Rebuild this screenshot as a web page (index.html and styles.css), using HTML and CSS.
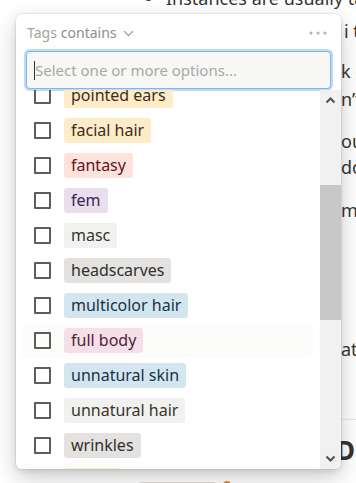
FILE: index.html
```html
<!DOCTYPE html>
<html lang="en">
<head>
  <meta charset="UTF-8">
  <meta name="viewport" content="width=device-width, initial-scale=1.0">
  <title>Tags filter</title>
  <link rel="stylesheet" href="styles.css">
</head>
<body>
  <!-- Page behind the filter menu -->
  <div class="page">
    <ul class="bullets">
      <li>Instances are usually tagged</li>
    </ul>
    <div class="frag frag-1">i t</div>
    <div class="frag frag-2">k c</div>
    <div class="frag frag-3">n’t</div>
    <div class="frag frag-4">ou</div>
    <div class="frag frag-5">do</div>
    <div class="frag frag-6">my</div>
    <div class="frag frag-7">ata</div>
    <hr class="divider">
    <h2 class="frag heading">Da</h2>
    <div class="bottom-bits">
      <span class="pill"></span>
      <span class="dot"></span>
    </div>
  </div>

  <!-- Filter menu -->
  <div class="popup">
    <div class="popup-head">
      <span class="prop">Tags</span>
      <span class="op">contains</span>
      <svg class="chev" width="11" height="7" viewBox="0 0 11 7"><polyline points="1,1 5.5,5.5 10,1" fill="none" stroke="#a5a4a0" stroke-width="1.3"/></svg>
      <svg class="more" width="18" height="4" viewBox="0 0 18 4"><circle cx="2" cy="2" r="1.6" fill="#b4b3af"/><circle cx="9" cy="2" r="1.6" fill="#b4b3af"/><circle cx="16" cy="2" r="1.6" fill="#b4b3af"/></svg>
    </div>

    <div class="search">
      <div class="input"><span class="caret"></span><span class="placeholder">Select one or more options...</span></div>
    </div>

    <div class="list-wrap">
      <div class="list">
        <div class="rows">
          <div class="row"><span class="box"></span><span class="tag yellow">pointed ears</span></div>
          <div class="row"><span class="box"></span><span class="tag yellow">facial hair</span></div>
          <div class="row"><span class="box"></span><span class="tag red">fantasy</span></div>
          <div class="row"><span class="box"></span><span class="tag purple">fem</span></div>
          <div class="row"><span class="box"></span><span class="tag default">masc</span></div>
          <div class="row"><span class="box"></span><span class="tag gray">headscarves</span></div>
          <div class="row"><span class="box"></span><span class="tag blue">multicolor hair</span></div>
          <div class="row hover"><span class="box"></span><span class="tag pink">full body</span></div>
          <div class="row"><span class="box"></span><span class="tag blue">unnatural skin</span></div>
          <div class="row"><span class="box"></span><span class="tag default">unnatural hair</span></div>
          <div class="row"><span class="box"></span><span class="tag gray">wrinkles</span></div>
          <div class="row hover"><span class="box"></span><span class="tag yellow">horns</span></div>
        </div>
      </div>
      <div class="scrollbar">
        <svg class="arrow" width="21" height="20" viewBox="0 0 21 20"><polyline points="6.5,12.5 10.5,8.5 14.5,12.5" fill="none" stroke="#505050" stroke-width="2"/></svg>
        <div class="track">
          <div class="thumb"></div>
        </div>
        <svg class="arrow" width="21" height="20" viewBox="0 0 21 20"><polyline points="6.5,7.5 10.5,11.5 14.5,7.5" fill="none" stroke="#505050" stroke-width="2"/></svg>
      </div>
    </div>
  </div>
</body>
</html>
```

FILE: styles.css
```css
body {
  margin: 0;
  font-family: "Noto Sans", "Open Sans", sans-serif;
  color: #37352f;
  background: #fff;
  overflow: hidden;
  height: 483px;
}

/* Background page */
.page {
  margin-top: -14px;
  font-size: 18px;
  line-height: 24px;
}
.bullets {
  margin: 0;
  padding-left: 166px;
  white-space: nowrap;
}
.bullets li::marker { font-size: 20px; }
.frag {
  padding-left: 341px;
  white-space: nowrap;
  height: 24px;
}
.frag-1 { margin-top: 9px; padding-left: 344px; }
.frag-2 { margin-top: 16px; }
.frag-3 { margin-top: 4px; }
.frag-4 { margin-top: 18px; }
.frag-5 { margin-top: 2px; }
.frag-6 { margin-top: 19px; }
.frag-7 { margin-top: 115px; }
.divider {
  margin: 58px 0 0 341px;
  border: none;
  border-top: 1px solid #e9e9e7;
}
.heading {
  margin: 14px 0 0 0;
  padding-left: 336px;
  font-size: 26px;
  font-weight: 700;
  line-height: 32px;
  height: 32px;
}
.bottom-bits {
  display: flex;
  align-items: flex-start;
  gap: 4px;
  margin-top: 16px;
  padding-left: 135px;
}
.pill {
  width: 82px;
  height: 20px;
  border: 1px solid #dcdbd8;
  border-radius: 6px;
}
.dot {
  width: 8px;
  height: 8px;
  border-radius: 50%;
  background: #d9823b;
  margin-top: -1px;
}

/* Filter menu */
.popup {
  position: absolute;
  left: 16px;
  top: 14px;
  width: 325px;
  height: 455px;
  background: #fff;
  border-radius: 6px;
  overflow: hidden;
  display: flex;
  flex-direction: column;
  box-shadow: rgba(15, 15, 15, 0.05) 0 0 0 1px, rgba(15, 15, 15, 0.1) 0 3px 6px, rgba(15, 15, 15, 0.2) 0 9px 24px;
}
.popup-head {
  height: 37px;
  display: flex;
  align-items: center;
  padding: 0 14px 0 11px;
  font-size: 14px;
  flex-shrink: 0;
}
.prop { color: #a3a29e; }
.op { color: #8f8e8a; margin-left: 4px; }
.chev { margin-left: 6px; margin-top: 1px; }
.more { margin-left: auto; }

.search {
  padding: 0 10px;
  flex-shrink: 0;
}
.input {
  height: 38px;
  display: flex;
  align-items: center;
  padding-left: 8px;
  background: #f7f7f5;
  border-radius: 4px;
  box-shadow: inset 0 0 0 1px rgba(35, 131, 226, 0.55), 0 0 0 2px rgba(35, 131, 226, 0.3);
  font-size: 15px;
}
.caret {
  width: 1px;
  height: 19px;
  background: #37352f;
}
.placeholder { color: #a9a8a4; }

.list-wrap {
  flex: 1;
  display: flex;
  margin-top: 1px;
  min-height: 0;
}
.list {
  flex: 1;
  overflow: hidden;
}
.rows { margin-top: -12px; }
.row {
  height: 35px;
  display: flex;
  align-items: center;
  gap: 13px;
  padding-left: 18px;
}
.row.hover {
  background: #fcfcfb;
  margin: 0 7px 0 6px;
  padding-left: 12px;
  border-radius: 4px;
}
.box {
  width: 17px;
  height: 17px;
  box-sizing: border-box;
  border: 2px solid #5d5d5b;
  border-radius: 1px;
  flex-shrink: 0;
}
.tag {
  height: 25px;
  line-height: 25px;
  padding: 0 7px;
  border-radius: 3px;
  font-size: 16px;
  white-space: nowrap;
}
.tag.yellow { background: #fdecc8; color: #402c1b; }
.tag.red { background: #ffe2dd; color: #5d1715; }
.tag.purple { background: #e8deee; color: #412454; }
.tag.default { background: #f1f1ef; color: #37352f; }
.tag.gray { background: #e3e2e0; color: #32302c; }
.tag.blue { background: #d3e5ef; color: #183347; }
.tag.pink { background: #f5e0e9; color: #4c2337; }

.scrollbar {
  width: 21px;
  background: #f1f1f1;
  display: flex;
  flex-direction: column;
}
.arrow { flex-shrink: 0; }
.track {
  flex: 1;
  padding-top: 75px;
}
.thumb {
  height: 135px;
  background: #c8c8c8;
}
```
